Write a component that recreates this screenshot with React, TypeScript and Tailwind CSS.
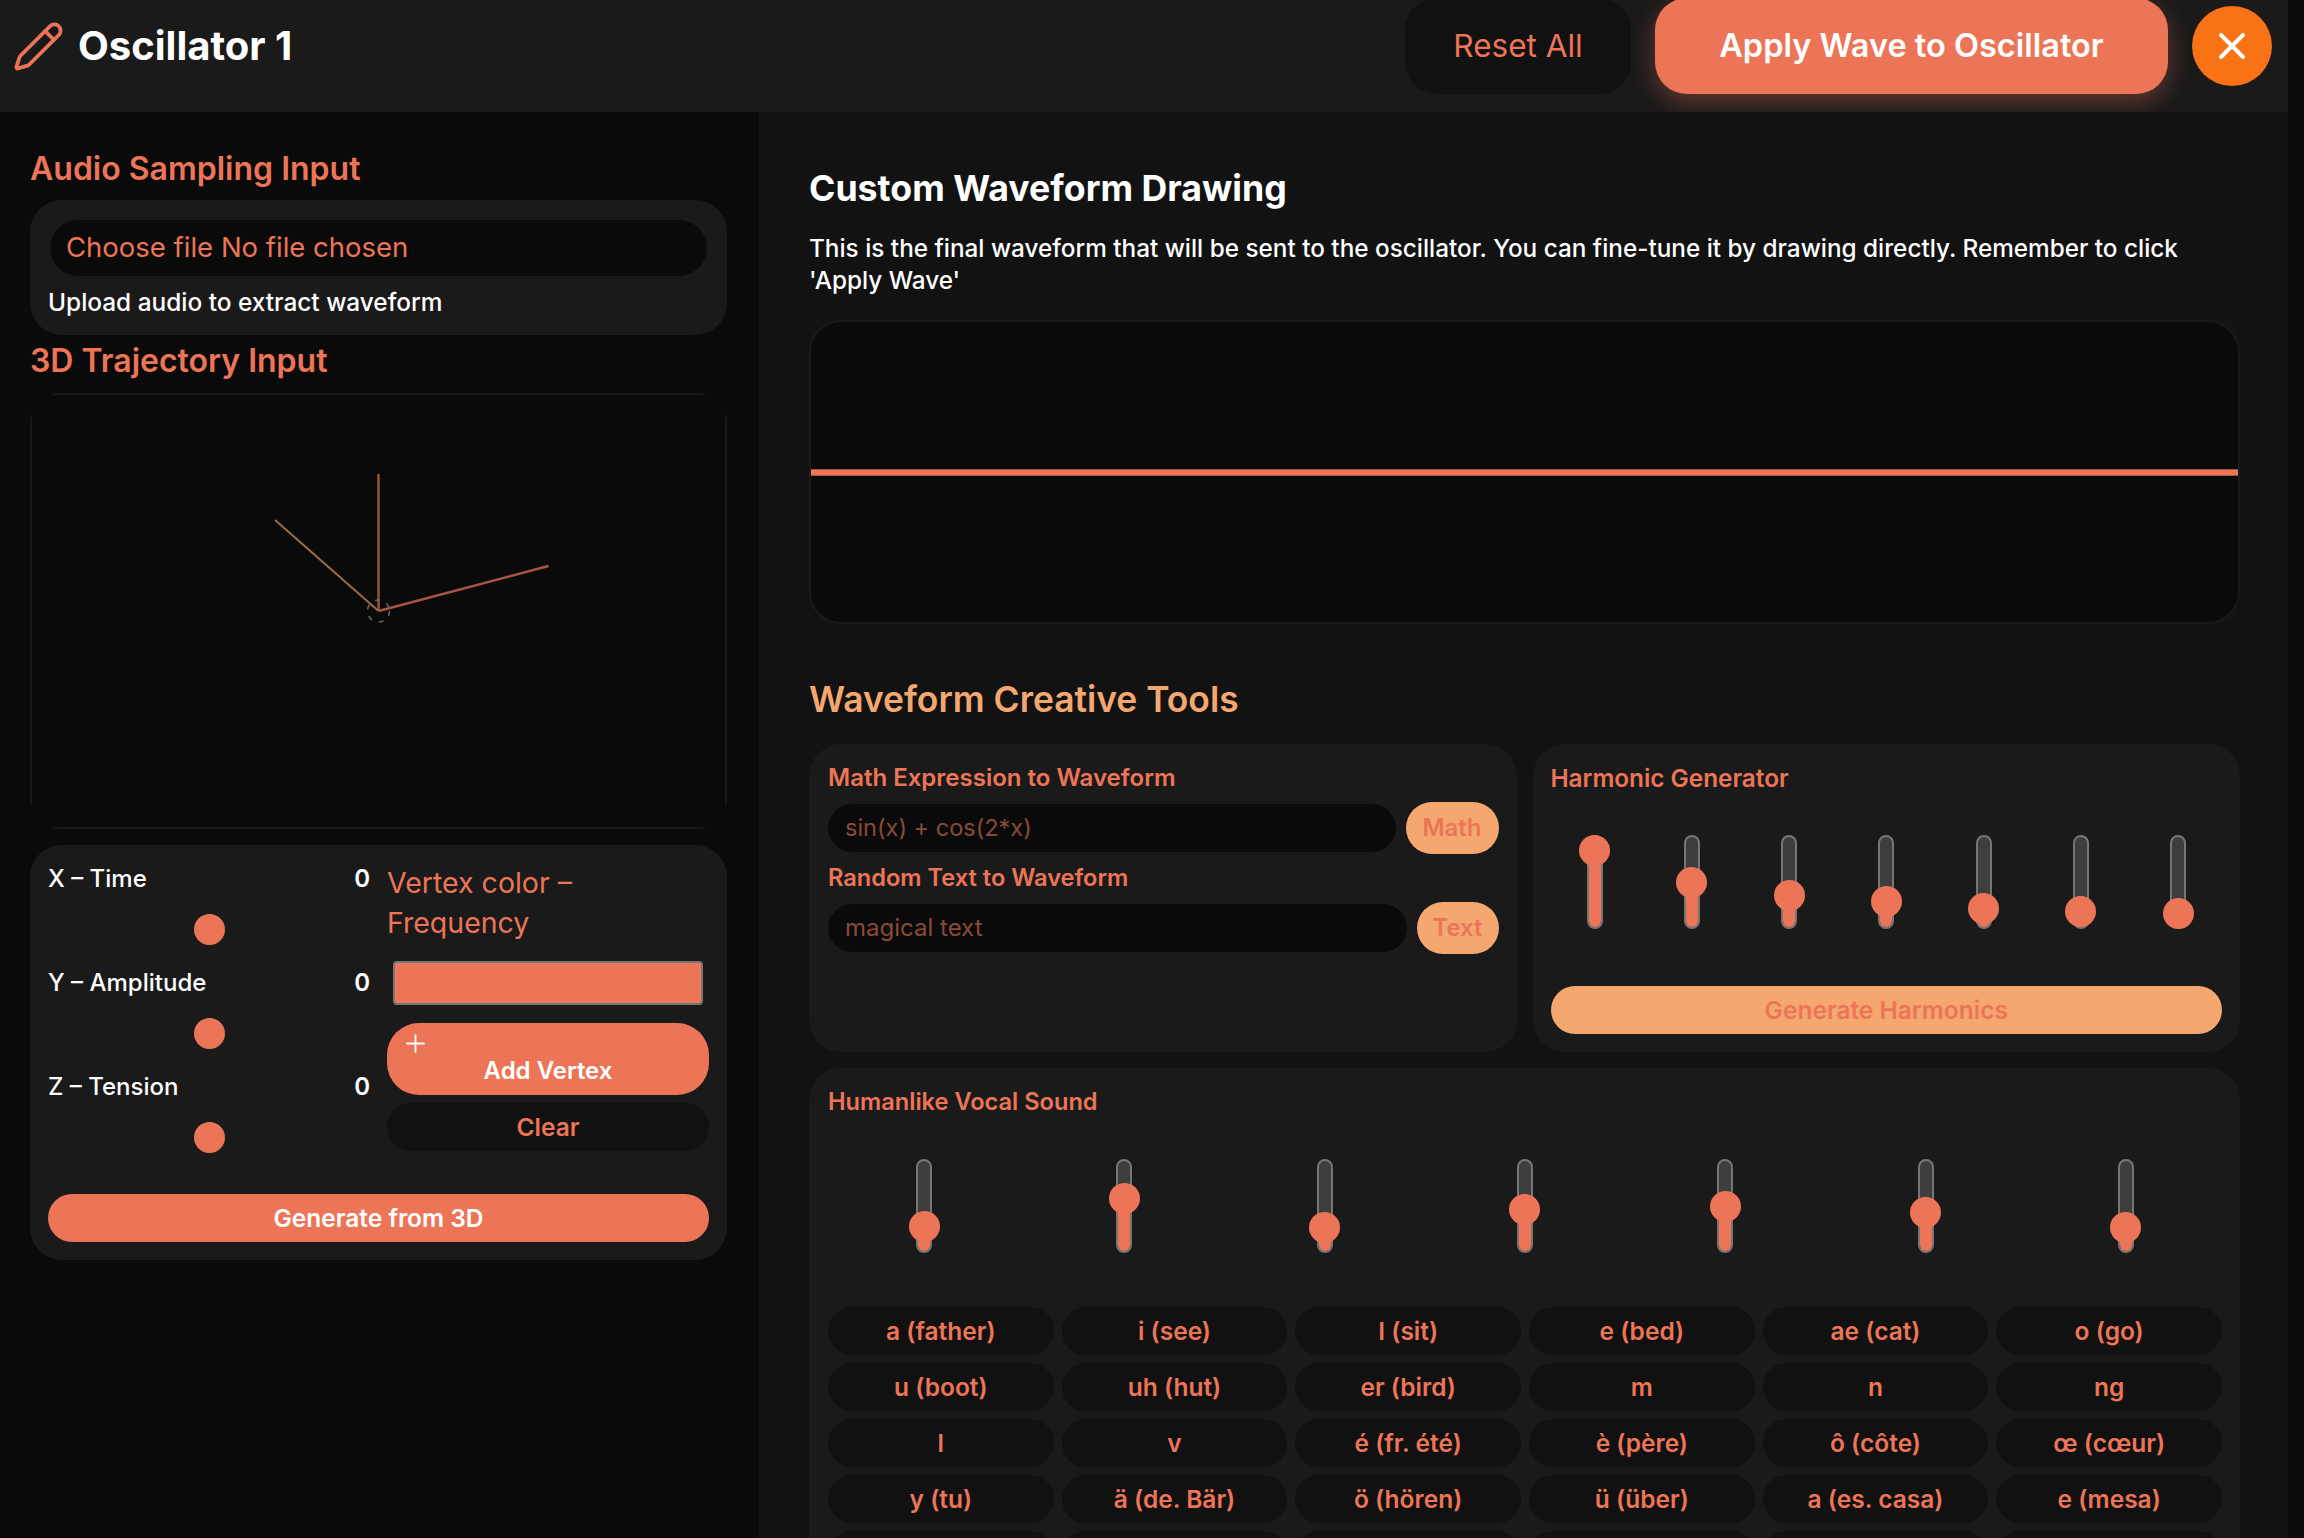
import React from "react";
import { Pencil, Plus, X } from "lucide-react";

// thumb centre, measured from the top of the 94px track
const harmonics = [15, 47, 60, 66, 73, 76, 78];
const formants = [67, 39, 68, 50, 47, 53, 68];

const vowels = [
  "a (father)", "i (see)", "I (sit)", "e (bed)", "ae (cat)", "o (go)",
  "u (boot)", "uh (hut)", "er (bird)", "m", "n", "ng",
  "l", "v", "é (fr. été)", "è (père)", "ô (côte)", "œ (cœur)",
  "y (tu)", "ä (de. Bär)", "ö (hören)", "ü (über)", "a (es. casa)", "e (mesa)",
  "", "", "", "", "", "",
];

function VSlider({ center }: { center: number }) {
  return (
    <div className="relative w-[16px] h-[94px] rounded-full border-2 border-[#767676] bg-[#3e3e3e]">
      <div
        className="absolute inset-x-0 bottom-0 rounded-b-full bg-[#ed7557]"
        style={{ top: center - 2 }}
      />
      <div
        className="absolute -left-[9.5px] w-[31px] h-[31px] rounded-full bg-[#ed7557]"
        style={{ top: center - 17.5 }}
      />
    </div>
  );
}

function AxisRow({ label }: { label: string }) {
  return (
    <div className="h-[104px]">
      <div className="flex justify-between items-center h-[32px] text-[24px] font-medium text-white">
        <span>{label}</span>
        <span className="font-semibold">0</span>
      </div>
      <div className="flex justify-center mt-[19px]">
        <div className="w-[31px] h-[31px] rounded-full bg-[#ed7557]" />
      </div>
    </div>
  );
}

export default function App() {
  return (
    <div
      className="flex overflow-hidden w-full h-screen bg-[#0c0c0c] text-[#ed7557]"
      style={{ fontFamily: "Inter, 'Noto Sans', sans-serif" }}
    >
      <div className="flex flex-col flex-1 min-w-0">
        {/* top bar */}
        <header className="flex shrink-0 justify-between items-center pl-[12px] pr-[16px] pb-[20px] h-[112px] bg-[#1a1a1a]">
          <div className="flex gap-[13px] items-center">
            <Pencil size={53} strokeWidth={1.7} />
            <h1 className="text-[40px] font-bold text-white">Oscillator 1</h1>
          </div>
          <div className="flex gap-[24px] items-center">
            <button className="w-[226px] h-[96px] rounded-[32px] bg-[#111111] text-[31.5px]">
              Reset All
            </button>
            <button className="w-[513px] h-[96px] rounded-[32px] bg-[#ed7557] text-[32.5px] font-semibold text-white shadow-[0_8px_24px_rgba(238,116,85,0.35)]">
              Apply Wave to Oscillator
            </button>
            <button className="flex justify-center items-center w-[80px] h-[80px] rounded-full bg-[#f97316] text-white">
              <X size={44} strokeWidth={2.2} />
            </button>
          </div>
        </header>

        <div className="flex flex-1 min-h-0">
          {/* left column */}
          <aside className="shrink-0 pl-[30px] pr-[32px] w-[759px] bg-[#0a0a0a]">
            <h2 className="mt-[39px] h-[36px] text-[32px] font-semibold leading-[36px]">
              Audio Sampling Input
            </h2>
            <div className="mt-[13px] px-[20px] pt-[20px] h-[135px] rounded-[32px] bg-[#1a1a1a]">
              <div className="flex items-center px-[16px] h-[56px] rounded-full bg-[#0a0a0a] text-[27.5px]">
                Choose file No file chosen
              </div>
              <p className="mt-[10px] -ml-[2px] text-[24.4px] font-medium text-white leading-[32px]">
                Upload audio to extract waveform
              </p>
            </div>
            <h2 className="mt-[8px] h-[36px] text-[32px] font-semibold leading-[36px]">
              3D Trajectory Input
            </h2>
            <div className="relative mt-[14px] h-[436px] rounded-[32px] border-2 border-[#1a1a1a]">
              <svg className="absolute inset-0 w-full h-full bg-[#0a0a0a]" viewBox="0 0 693 432">
                <line x1="346.5" y1="216" x2="346.5" y2="79" stroke="#8f5a30" strokeWidth="2.5" />
                <line x1="346.5" y1="216" x2="243" y2="125" stroke="#9a6c42" strokeWidth="2" />
                <line x1="346.5" y1="216" x2="516.5" y2="171" stroke="#a85542" strokeWidth="2.5" />
                <circle cx="346.5" cy="216" r="11" fill="none" stroke="#666666" strokeWidth="1.5" strokeDasharray="5 7" />
              </svg>
            </div>
            <div className="mt-[16px] px-[18px] pt-[18px] h-[415px] rounded-[32px] bg-[#1a1a1a]">
              <div className="flex gap-[17px]">
                <div className="w-[322px]">
                  <AxisRow label="X – Time" />
                  <AxisRow label="Y – Amplitude" />
                  <AxisRow label="Z – Tension" />
                </div>
                <div className="flex-1">
                  <p className="text-[28.5px] leading-[40px]">Vertex color – Frequency</p>
                  <div className="mx-[6px] mt-[18px] h-[44px] rounded-[4px] border-2 border-[#767676] bg-[#ed7557]" />
                  <button className="flex flex-col mt-[18px] pt-[6px] w-full h-[72px] rounded-[32px] bg-[#ed7557] text-[24px] font-semibold text-white">
                    <Plus size={29} strokeWidth={1.5} className="ml-[14px]" />
                    <span className="self-center mt-px leading-[24px]">Add Vertex</span>
                  </button>
                  <button className="mt-[8px] w-full h-[48px] rounded-full bg-[#111111] text-[24.5px] font-semibold">
                    Clear
                  </button>
                </div>
              </div>
              <button className="mt-[19px] w-full h-[48px] rounded-full bg-[#ed7557] text-[24.5px] font-semibold text-white">
                Generate from 3D
              </button>
            </div>
          </aside>

          {/* right column */}
          <main className="flex-1 min-w-0 pl-[50px] pr-[48px] bg-[#121212]">
            <h2 className="mt-[54px] text-[35.7px] font-bold text-white leading-[44px]">
              Custom Waveform Drawing
            </h2>
            <p className="mt-[22px] text-[24.3px] font-medium text-white leading-[32px]">
              This is the final waveform that will be sent to the oscillator. You can fine-tune it by drawing directly. Remember to click 'Apply Wave'
            </p>
            <div className="flex items-center mt-[24px] h-[304px] rounded-[32px] border-2 border-[#1a1a1a] bg-[#0a0a0a]">
              <div className="w-full h-[7px] border-y border-[#a5553f] bg-[#ed7557]" />
            </div>
            <h2 className="mt-[54px] text-[35.4px] font-semibold text-[#f4a76f] leading-[44px]">
              Waveform Creative Tools
            </h2>
            <div className="grid grid-cols-2 gap-[16px] mt-[22px]">
              <section className="pl-[19px] pr-[18px] pt-[19px] h-[308px] rounded-[32px] bg-[#1a1a1a]">
                <h3 className="text-[24px] font-semibold leading-[30px]">Math Expression to Waveform</h3>
                <div className="flex gap-[10px] items-center mt-[9px]">
                  <div className="flex flex-1 items-center px-[17px] h-[48px] rounded-full bg-[#0a0a0a] text-[23.5px] text-[#8a4a38]">
                    sin(x) + cos(2*x)
                  </div>
                  <button className="w-[93px] h-[52px] rounded-[26px] bg-[#f4a76f] text-[24px] font-semibold">Math</button>
                </div>
                <h3 className="mt-[9px] text-[23.6px] font-semibold leading-[30px]">Random Text to Waveform</h3>
                <div className="flex gap-[10px] items-center mt-[9px]">
                  <div className="flex flex-1 items-center px-[17px] h-[48px] rounded-full bg-[#0a0a0a] text-[24px] text-[#8a4a38]">
                    magical text
                  </div>
                  <button className="w-[82px] h-[52px] rounded-[26px] bg-[#f4a76f] text-[24px] font-semibold">Text</button>
                </div>
              </section>
              <section className="px-[18px] pt-[19px] h-[308px] rounded-[32px] bg-[#1a1a1a]">
                <h3 className="text-[24.3px] font-semibold leading-[30px]">Harmonic Generator</h3>
                <div className="flex justify-between mt-[42px] px-[36px]">
                  {harmonics.map((v, i) => (
                    <VSlider key={i} center={v} />
                  ))}
                </div>
                <button className="mt-[57px] w-full h-[48px] rounded-full bg-[#f4a76f] text-[24.5px] font-semibold">
                  Generate Harmonics
                </button>
              </section>
            </div>
            <section className="mt-[16px] pl-[19px] pr-[18px] pt-[19px] pb-[32px] rounded-[32px] bg-[#1a1a1a]">
              <h3 className="text-[23.6px] font-semibold leading-[30px]">Humanlike Vocal Sound</h3>
              <div className="flex justify-between mt-[42px] px-[88px]">
                {formants.map((v, i) => (
                  <VSlider key={i} center={v} />
                ))}
              </div>
              <div className="grid grid-cols-6 gap-[8px] mt-[54px]">
                {vowels.map((v, i) => (
                  <button key={i} className="h-[48px] rounded-full bg-[#111111] text-[24.5px] font-semibold">
                    {v}
                  </button>
                ))}
              </div>
            </section>
          </main>
        </div>
      </div>
      {/* scrollbar gutter */}
      <div className="shrink-0 w-[16px] bg-[#0c0c0c]" />
    </div>
  );
}
